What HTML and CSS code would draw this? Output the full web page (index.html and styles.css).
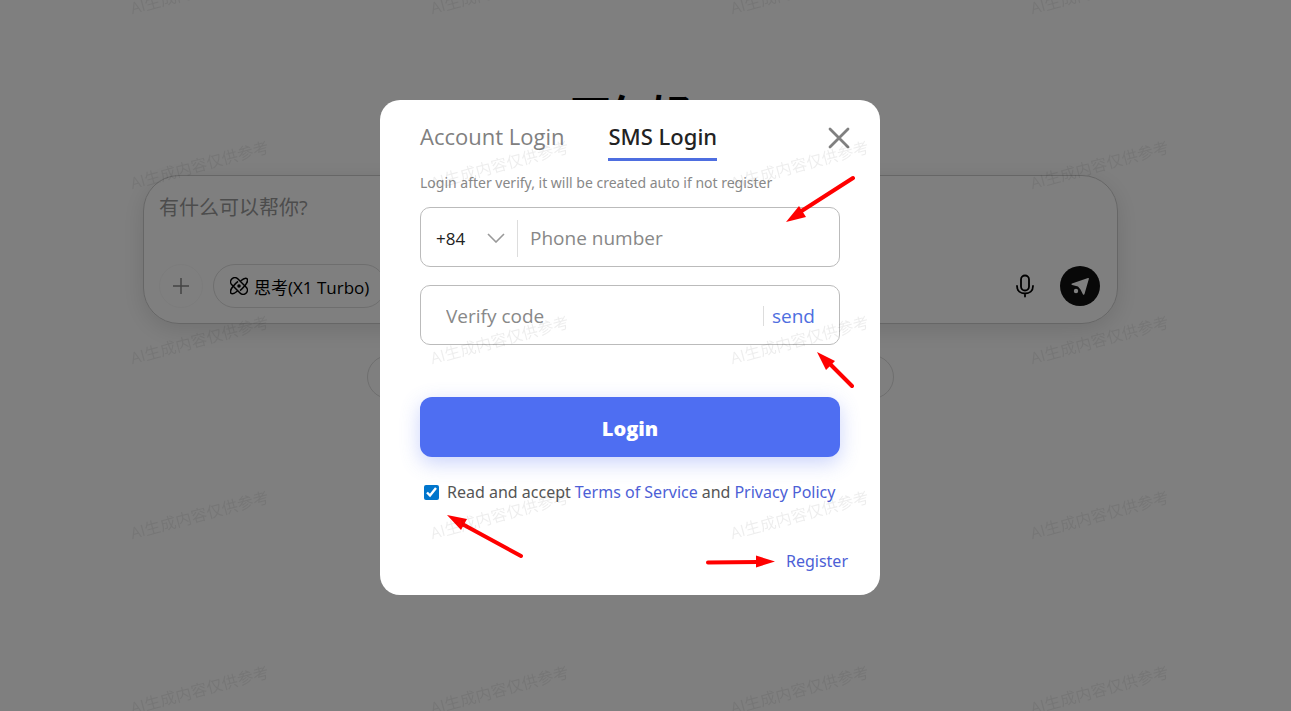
FILE: index.html
```
<!DOCTYPE html>
<html lang="zh-CN">
<head>
    <meta charset="UTF-8">
    <meta name="viewport" content="width=device-width, initial-scale=1.0">
    <title>SMS Login</title>
    <link rel="stylesheet" href="styles.css">
</head>
<body>
    <main class="page">
        <h1 class="greeting">下午好</h1>

        <div class="composer">
            <input class="composer-input" type="text" aria-label="有什么可以帮你?" placeholder="有什么可以帮你?">
            <div class="composer-bar">
                <button class="round-btn" type="button" aria-label="Add">
                    <svg width="18" height="18" viewBox="0 0 18 18" fill="none" stroke="#888" stroke-width="1.5"><path d="M9 1v16M1 9h16"/></svg>
                </button>
                <button class="model-btn" type="button">
                    <svg width="18" height="18" viewBox="0 0 18 18" fill="none" stroke="#000" stroke-width="1.500">
                        <rect x="-1" y="4.800" width="20" height="8.400" rx="4" transform="rotate(45 9 9)"/>
                        <path d="M10.500 4C13.500 1.500 16 .8 17 1.800s.4 4-2.200 7c-1.500 1.800-3 3.400-4.800 4.800M7.500 14C4.500 16.500 2 17.200 1 16.200s-.4-4 2.200-7C4.700 7.400 6.200 5.800 8 4.400"/>
                        <circle cx="9" cy="9" r="1" fill="#000"/>
                    </svg>
                    思考(X1 Turbo)
                </button>
                <button class="mic-btn" type="button" aria-label="Voice">
                    <svg width="20" height="24" viewBox="0 0 20 24" fill="none" stroke="#000" stroke-width="1.8" stroke-linecap="round">
                        <rect x="6" y="1.5" width="8" height="15" rx="4"/>
                        <path d="M2 12c0 5 3.500 7.500 8 7.500s8-2.500 8-7.500M10 19.500v3"/>
                    </svg>
                </button>
                <button class="send-btn" type="button" aria-label="Send">
                    <svg width="20" height="20" viewBox="0 0 20 20" fill="#fff">
                        <path d="M2 7.500 18 2c.7-.2 1 .1.900.8L14.500 18c-.3 1-1.200 1-1.600.2l-2.400-4.800L8 10.500 2.200 9c-.9-.3-.9-1.200-.2-1.500z"/>
                        <circle cx="6" cy="15" r="2.200"/>
                    </svg>
                </button>
            </div>
        </div>

        <div class="suggestions"></div>
    </main>

    <div class="overlay">
        <form class="modal" id="loginForm">
            <div class="tabs">
                <button class="tab" type="button">Account Login</button>
                <button class="tab active" type="button">SMS Login</button>
                <button class="close" type="button" aria-label="Close">
                    <svg width="22" height="22" viewBox="0 0 22 22" stroke="#808080" stroke-width="2.800" stroke-linecap="round"><path d="M2 2l18 18M20 2L2 20"/></svg>
                </button>
            </div>

            <p class="note">Login after verify, it will be created auto if not register</p>

            <div class="field">
                <div class="country">
                    <select aria-label="Country code">
                        <option>+84</option>
                    </select>
                    <svg width="18" height="10" viewBox="0 0 18 10" fill="none" stroke="#999" stroke-width="1.600"><path d="M1 1l8 8 8-8"/></svg>
                </div>
                <input class="phone" type="tel" aria-label="Phone number" placeholder="Phone number">
            </div>

            <div class="field">
                <input class="code" type="text" aria-label="Verify code" placeholder="Verify code">
                <button class="send-code" type="button">send</button>
            </div>

            <button class="login-btn" type="submit">Login</button>

            <div class="accept">
                <input type="checkbox" id="accept" checked>
                <label for="accept">Read and accept</label>
                <a href="#">Terms of Service</a>
                <span>and</span>
                <a href="#">Privacy Policy</a>
            </div>

            <div class="register"><a href="#">Register</a></div>

            <svg class="arrows" viewBox="0 0 500 495" fill="#f00" stroke="#f00" stroke-width="4" stroke-linecap="round">
                <path d="M473 78L420 112M472 286L450 264M141 456L84 425M328 462.500L378 462"/>
                <path stroke="none" d="M406 122l13-16 7 11zM437 252l18 9-9 9zM67 415l20 4-6 11zM395 461.500l-19 6v-12z"/>
            </svg>
        </form>
    </div>

    <div class="watermark" aria-hidden="true">
        <span>AI生成内容仅供参考</span><span>AI生成内容仅供参考</span><span>AI生成内容仅供参考</span><span>AI生成内容仅供参考</span>
        <span>AI生成内容仅供参考</span><span>AI生成内容仅供参考</span><span>AI生成内容仅供参考</span><span>AI生成内容仅供参考</span>
        <span>AI生成内容仅供参考</span><span>AI生成内容仅供参考</span><span>AI生成内容仅供参考</span><span>AI生成内容仅供参考</span>
        <span>AI生成内容仅供参考</span><span>AI生成内容仅供参考</span><span>AI生成内容仅供参考</span><span>AI生成内容仅供参考</span>
        <span>AI生成内容仅供参考</span><span>AI生成内容仅供参考</span><span>AI生成内容仅供参考</span><span>AI生成内容仅供参考</span>
    </div>
</body>
</html>
```

FILE: styles.css
```
/* General Styles */
* {
    box-sizing: border-box;
}

body {
    margin: 0;
    min-height: 100vh;
    font-family: "Open Sans", "Noto Sans CJK SC", sans-serif;
    background-color: #fff;
    overflow: hidden;
}

button,
input,
select {
    font-family: inherit;
    margin: 0;
    padding: 0;
    border: none;
    background: none;
    outline: none;
}

button {
    cursor: pointer;
}

svg {
    flex: none;
}

a {
    color: #4d5fd6;
    text-decoration: none;
}

/* Chat page */
.page {
    padding: 84px 173px 0 143px;
}

.greeting {
    margin: 0 0 31px;
    font-size: 40px;
    line-height: 60px;
    text-align: center;
}

.composer {
    height: 149px;
    padding: 17px 17px 15px 15px;
    display: flex;
    flex-direction: column;
    justify-content: space-between;
    border: 1px solid #ccc;
    border-radius: 36px;
    box-shadow: 0 6px 24px rgba(0, 0, 0, 0.12);
}

.composer-input {
    width: 100%;
    font-size: 20px;
    line-height: 30px;
}

.composer-input::placeholder {
    color: #999;
}

.composer-bar {
    display: flex;
    align-items: center;
}

.round-btn,
.model-btn {
    display: flex;
    align-items: center;
    justify-content: center;
    height: 44px;
    border: 1px solid #ddd;
    border-radius: 22px;
}

.round-btn {
    width: 44px;
    border-color: #f8f8f8;
}

.model-btn {
    margin-left: 10px;
    padding: 0 16px;
    gap: 6px;
    font-size: 17px;
    color: #000;
}

.mic-btn {
    display: flex;
    margin-left: auto;
    margin-right: 25px;
}

.send-btn {
    display: flex;
    align-items: center;
    justify-content: center;
    width: 40px;
    height: 40px;
    border-radius: 50%;
    background-color: #111;
}

.suggestions {
    width: 54%;
    height: 44px;
    margin: 31px auto 0;
    border: 1px solid #ddd;
    border-radius: 22px;
}

/* Login dialog */
.overlay {
    position: fixed;
    inset: 0;
    padding: 100px 31px 0 0;
    display: flex;
    justify-content: center;
    align-items: flex-start;
    background-color: rgba(0, 0, 0, 0.5);
}

.modal {
    position: relative;
    width: 500px;
    max-width: 100%;
    padding: 14px 40px 22px;
    background-color: #fff;
    border-radius: 20px;
}

.tabs {
    display: flex;
    align-items: center;
    gap: 44px;
}

.tab {
    font-size: 22px;
    line-height: 44px;
    color: #808080;
    border-bottom: 3px solid transparent;
}

.tab.active {
    font-family: "Noto Sans", sans-serif;
    font-weight: 500;
    color: #222;
    border-bottom-color: #4e6ee0;
}

.close {
    display: flex;
    margin-left: auto;
    margin-right: -10px;
}

.note {
    margin: 10px 0 12px;
    font-family: "Noto Sans", sans-serif;
    font-size: 14px;
    line-height: 24px;
    color: #888;
}

.field {
    display: flex;
    align-items: center;
    height: 60px;
    margin-bottom: 18px;
    padding-top: 2px;
    border: 1px solid #bbb;
    border-radius: 10px;
}

.field input {
    flex: 1;
    min-width: 0;
    font-size: 19px;
    line-height: 40px;
}

.field input::placeholder {
    color: #888;
}

.country {
    display: flex;
    align-items: center;
    justify-content: space-between;
    width: 97px;
    height: 37px;
    padding: 0 12px 0 15px;
    border-right: 1px solid #ddd;
}

.country select {
    appearance: none;
    font-size: 17px;
    color: #222;
}

.field .phone {
    margin-left: 12px;
}

.field .code {
    margin-left: 25px;
}

.send-code {
    margin-right: 24px;
    padding-left: 8px;
    font-size: 19px;
    line-height: 20px;
    color: #4e6ee0;
    border-left: 1px solid #ddd;
}

.login-btn {
    width: 100%;
    height: 60px;
    margin-top: 34px;
    padding-top: 2px;
    font-size: 20px;
    font-weight: 800;
    color: #fff;
    background-color: #4e6ef2;
    border-radius: 12px;
    box-shadow: 0 6px 20px rgba(78, 110, 242, 0.3);
}

.accept {
    display: flex;
    align-items: center;
    gap: 4px;
    margin-top: 23px;
    font-family: "Noto Sans", sans-serif;
    font-size: 16px;
    line-height: 24px;
    color: #555;
    white-space: nowrap;
}

.accept input {
    width: 15px;
    height: 15px;
    margin: 0 4px 0 4px;
    accent-color: #0075cc;
}

.register {
    margin: 45px -8px 0 0;
    font-family: "Noto Sans", sans-serif;
    font-size: 16px;
    line-height: 24px;
    text-align: right;
}

.arrows {
    position: absolute;
    inset: 0;
    width: 100%;
    height: 100%;
    pointer-events: none;
}

/* Watermark */
.watermark {
    position: fixed;
    inset: -99px 0 0 49px;
    display: grid;
    grid-template-columns: repeat(4, 300px);
    grid-auto-rows: 175px;
    place-items: center;
    overflow: hidden;
    font-size: 16px;
    color: rgba(0, 0, 0, 0.07);
    pointer-events: none;
}

.watermark span {
    transform: rotate(-15deg);
}
```
